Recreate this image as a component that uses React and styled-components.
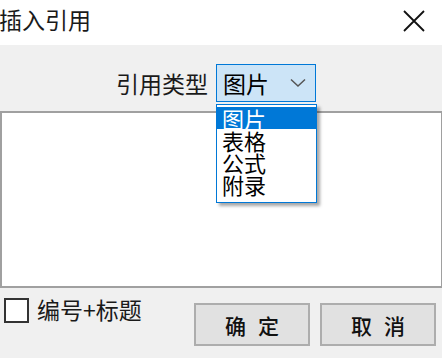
import React from "react";
import styled, { createGlobalStyle } from "styled-components";

const Global = createGlobalStyle`
  html, body {
    margin: 0;
    padding: 0;
    background: #f0f0f0;
  }
  body {
    font-family: "Noto Sans CJK SC", "Noto Sans", sans-serif;
    color: #000;
  }
`;

const Dialog = styled.div`
  position: relative;
  width: 442px;
  height: 358px;
  background: #f0f0f0;
  overflow: hidden;
`;

const TitleBar = styled.div`
  height: 45px;
  background: #fff;
  display: flex;
  align-items: center;
  justify-content: space-between;
  padding-right: 16px;
  box-sizing: border-box;
`;

const Title = styled.div`
  font-size: 23px;
  line-height: 24px;
  margin-left: -1px;
  margin-top: -8px;
  color: #1a1a1a;
`;

const CloseBtn = styled.div`
  width: 24px;
  height: 24px;
  display: flex;
  align-items: center;
  justify-content: center;
  margin-top: -4px;
`;

const TypeRow = styled.div`
  display: flex;
  align-items: center;
  gap: 8px;
  padding: 19px 0 0 116px;
  height: 38px;
`;

const Label = styled.div`
  font-size: 23px;
  line-height: 24px;
  color: #1a1a1a;
`;

const Select = styled.div`
  width: 100px;
  height: 38px;
  box-sizing: border-box;
  border: 1px solid #0078d7;
  background: #cce4f7;
  display: flex;
  align-items: center;
  justify-content: space-between;
  padding: 0 9px 0 6px;
  font-size: 23px;
`;

const ListBox = styled.div`
  margin-top: 9px;
  height: 177px;
  box-sizing: border-box;
  border: 2px solid #a0a0a0;
  border-right-width: 1px;
  background: #fff;
`;

const Footer = styled.div`
  display: flex;
  align-items: flex-start;
  padding: 9px 6px 0 4px;
`;

const CheckLabel = styled.label`
  display: flex;
  align-items: flex-start;
  gap: 8px;
  font-size: 23px;
  line-height: 24px;
  flex: 1;
  color: #1a1a1a;
`;

const Box = styled.span`
  width: 25px;
  height: 25px;
  box-sizing: border-box;
  border: 2px solid #333;
  background: #fff;
  margin-top: 1px;
`;

const Buttons = styled.div`
  display: flex;
  gap: 10px;
  margin-top: 6px;
`;

const Button = styled.div`
  width: 116px;
  height: 43px;
  box-sizing: border-box;
  border: 2px solid #adadad;
  background: #e1e1e1;
  display: flex;
  align-items: center;
  justify-content: center;
  font-size: 21px;
  font-weight: 500;
  letter-spacing: 12px;
  padding-left: 12px;
  color: #111;
`;

const Menu = styled.div`
  position: absolute;
  left: 216px;
  top: 104px;
  width: 101px;
  height: 99px;
  box-sizing: border-box;
  border: 1px solid #0078d7;
  background: #fff;
  box-shadow: 3px 3px 3px rgba(0, 0, 0, 0.35);
  padding-top: 2px;
`;

const Item = styled.div`
  height: 22px;
  line-height: 22px;
  font-size: 22px;
  padding-left: 5px;
  background: ${({ $active }) => ($active ? "#0078d7" : "transparent")};
  color: ${({ $active }) => ($active ? "#fff" : "#000")};
  white-space: nowrap;
`;

const items = ["图片", "表格", "公式", "附录"];

export default function App() {
  return (
    <>
      <Global />
      <Dialog>
        <TitleBar>
          <Title>插入引用</Title>
          <CloseBtn>
            <svg width="22" height="22" viewBox="0 0 22 22">
              <path d="M1 1 L21 21 M21 1 L1 21" stroke="#111" strokeWidth="1.8" />
            </svg>
          </CloseBtn>
        </TitleBar>
        <TypeRow>
          <Label>引用类型</Label>
          <Select>
            <span>图片</span>
            <svg width="16" height="10" viewBox="0 0 16 10">
              <path d="M1 1.5 L8 8 L15 1.5" fill="none" stroke="#555" strokeWidth="1.5" />
            </svg>
          </Select>
        </TypeRow>
        <ListBox />
        <Footer>
          <CheckLabel>
            <Box />
            编号+标题
          </CheckLabel>
          <Buttons>
            <Button>确定</Button>
            <Button>取消</Button>
          </Buttons>
        </Footer>
        <Menu>
          {items.map((t, i) => (
            <Item key={t} $active={i === 0}>
              {t}
            </Item>
          ))}
        </Menu>
      </Dialog>
    </>
  );
}
